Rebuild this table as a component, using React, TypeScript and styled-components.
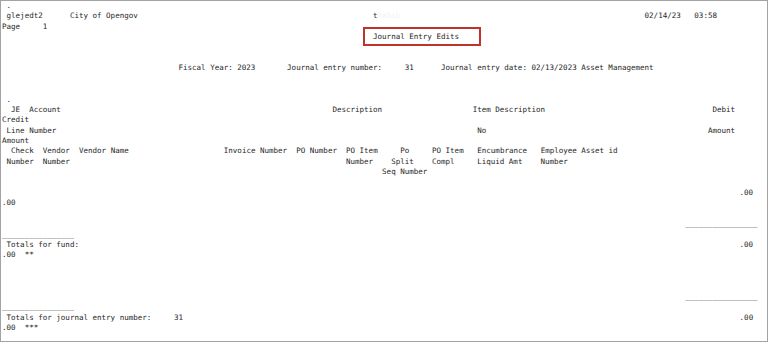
import React from 'react';
import styled, { createGlobalStyle } from 'styled-components';

type Seg = {
  col: number;
  text: string;
  tone?: 'faint' | 'boxed';
};

const GlobalStyle = createGlobalStyle`
  html, body {
    margin: 0;
    padding: 0;
    background: #fff;
  }
`;

const Frame = styled.div`
  box-sizing: border-box;
  width: 768px;
  height: 342px;
  border: 1px solid #a3a3a3;
  background: #fff;
  overflow: hidden;
`;

const Report = styled.pre`
  margin: 0;
  padding: 0 0 0 1px;
  font-family: "DejaVu Sans Mono", "Liberation Mono", monospace;
  font-size: 7.52px;
  line-height: 10.4px;
  color: #1e1e1e;
  white-space: pre;
`;

const Line = styled.div`
  height: 10.4px;
`;

const Faint = styled.span`
  color: #f1f1f1;
`;

// red highlight drawn over the report title
const Boxed = styled.span`
  position: relative;

  &::after {
    content: '';
    position: absolute;
    top: -5px;
    bottom: -5px;
    left: -10px;
    right: -22px;
    border: 2px solid #c2322c;
  }
`;

const rule = '________________';

const rows: Seg[][] = [
  [{ col: 1, text: '.' }],
  [
    { col: 1, text: 'glejedt2' },
    { col: 15, text: 'City of Opengov' },
    { col: 82, text: 't' },
    { col: 83, text: 'habib', tone: 'faint' },
    { col: 142, text: '02/14/23' },
    { col: 153, text: '03:58' },
  ],
  [{ col: 0, text: 'Page' }, { col: 9, text: '1' }],
  [{ col: 82, text: 'Journal Entry Edits', tone: 'boxed' }],
  [],
  [],
  [
    { col: 39, text: 'Fiscal Year: 2023' },
    { col: 63, text: 'Journal entry number:' },
    { col: 89, text: '31' },
    { col: 97, text: 'Journal entry date: 02/13/2023 Asset Management' },
  ],
  [],
  [],
  [{ col: 1, text: '.' }],
  [
    { col: 2, text: 'JE' },
    { col: 6, text: 'Account' },
    { col: 73, text: 'Description' },
    { col: 104, text: 'Item Description' },
    { col: 157, text: 'Debit' },
  ],
  [{ col: 0, text: 'Credit' }],
  [
    { col: 1, text: 'Line Number' },
    { col: 105, text: 'No' },
    { col: 156, text: 'Amount' },
  ],
  [{ col: 0, text: 'Amount' }],
  [
    { col: 2, text: 'Check' },
    { col: 9, text: 'Vendor' },
    { col: 17, text: 'Vendor Name' },
    { col: 49, text: 'Invoice Number' },
    { col: 65, text: 'PO Number' },
    { col: 76, text: 'PO Item' },
    { col: 88, text: 'Po' },
    { col: 95, text: 'PO Item' },
    { col: 105, text: 'Encumbrance' },
    { col: 119, text: 'Employee Asset id' },
  ],
  [
    { col: 1, text: 'Number' },
    { col: 9, text: 'Number' },
    { col: 76, text: 'Number' },
    { col: 86, text: 'Split' },
    { col: 95, text: 'Compl' },
    { col: 105, text: 'Liquid Amt' },
    { col: 119, text: 'Number' },
  ],
  [{ col: 84, text: 'Seq Number' }],
  [],
  [{ col: 163, text: '.00' }],
  [{ col: 0, text: '.00' }],
  [],
  [{ col: 151, text: rule }],
  [{ col: 0, text: rule }],
  [{ col: 1, text: 'Totals for fund:' }, { col: 163, text: '.00' }],
  [{ col: 0, text: '.00' }, { col: 5, text: '**' }],
  [],
  [],
  [],
  [{ col: 151, text: rule }],
  [{ col: 0, text: rule }],
  [
    { col: 1, text: 'Totals for journal entry number:' },
    { col: 38, text: '31' },
    { col: 163, text: '.00' },
  ],
  [{ col: 0, text: '.00' }, { col: 5, text: '***' }],
];

const renderRow = (segs: Seg[]) => {
  let cur = 0;
  return segs.map((seg, i) => {
    const gap = ' '.repeat(Math.max(0, seg.col - cur));
    cur = Math.max(cur, seg.col) + seg.text.length;
    let body: React.ReactNode = seg.text;
    if (seg.tone === 'faint') body = <Faint>{seg.text}</Faint>;
    if (seg.tone === 'boxed') body = <Boxed>{seg.text}</Boxed>;
    return (
      <React.Fragment key={i}>
        {gap}
        {body}
      </React.Fragment>
    );
  });
};

const App: React.FC = () => (
  <>
    <GlobalStyle />
    <Frame>
      <Report>
        {rows.map((segs, i) => (
          <Line key={i}>{renderRow(segs)}</Line>
        ))}
      </Report>
    </Frame>
  </>
);

export default App;
